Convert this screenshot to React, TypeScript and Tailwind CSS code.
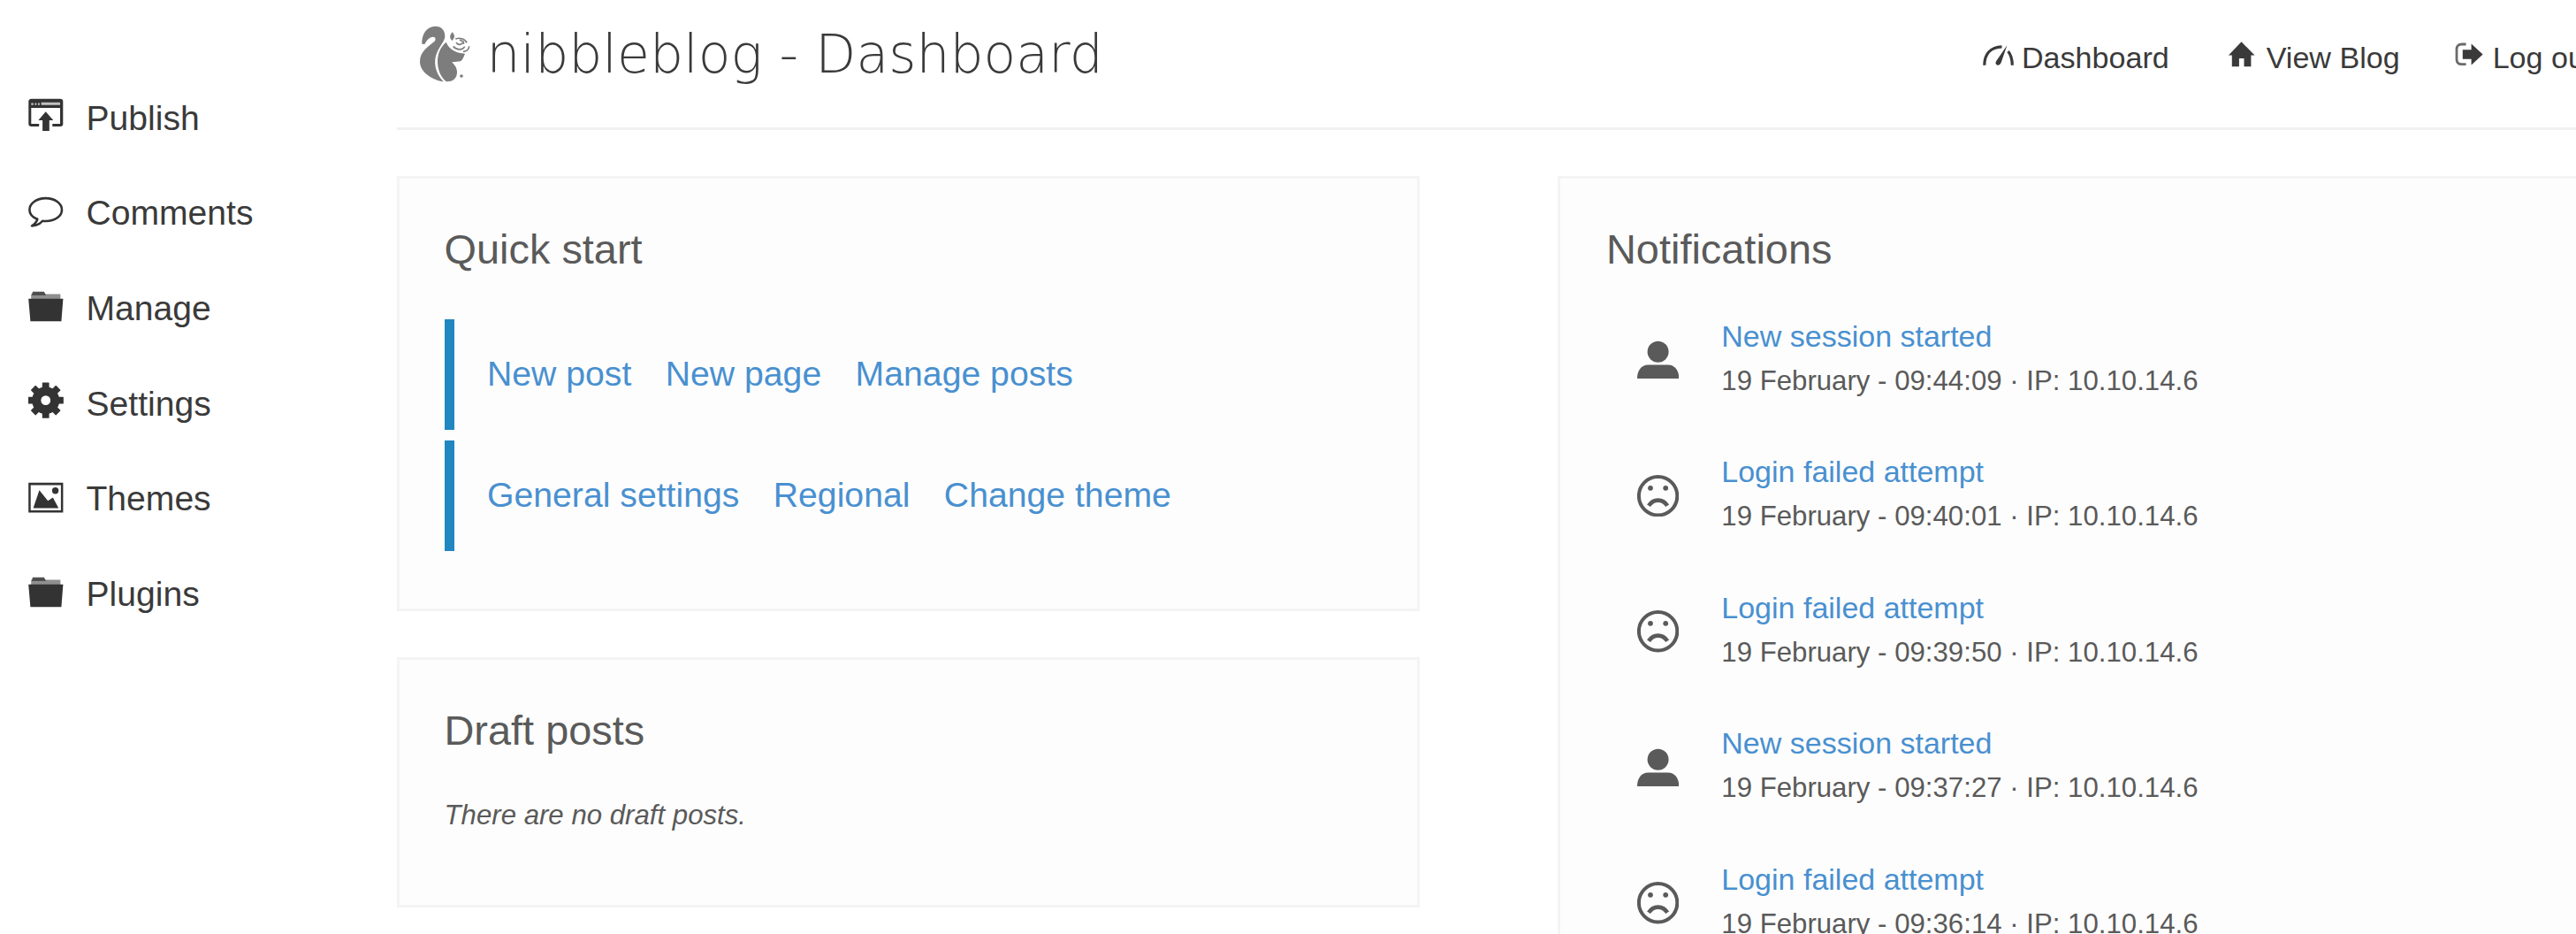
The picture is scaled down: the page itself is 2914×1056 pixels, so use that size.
import type { ReactNode } from "react";

const SANS = "font-['Liberation_Sans',Arial,sans-serif]";

function PublishIcon() {
  return (
    <>
      <path d="M3.500 3.700h32.800c1.900 0 3 1.100 3 3v25.600c0 1.700-1.100 2.800-3 2.800H27.300v-3H36V14H3.300v18.100h8.900v3H3.500c-1.900 0-3.200-1.100-3.200-2.800V6.700c0-1.900 1.300-3 3.200-3z" />
      <path d="M3.300 8.600h2.500v2.200H3.300zM7.500 8.600h1.900v2.200H7.500zM11 8.600h1.900v2.200H11zM14.600 7.800H36v3H14.600z" fill="#fff" opacity="0.7" />
      <path d="M19.700 18.300l8.600 9.600h-4.500V40h-7.700V27.900h-4.700z" />
    </>
  );
}

function CommentIcon() {
  return (
    <path
      d="M19.700 8.100C9.300 8.100 1.400 14 1.400 21.200c0 4.400 3.200 8.300 8.900 10.600-.7 3.100-3 5.500-6.200 7.600 5.500-.3 9.400-2.200 12-5.600 1.400.2 2.500.2 3.600.2 10.500 0 18.300-5.600 18.300-12.800S30.200 8.100 19.700 8.100z"
      fill="none"
      stroke="currentColor"
      strokeWidth="2.600"
      strokeLinejoin="round"
    />
  );
}

function FolderIcon() {
  return (
    <>
      <path d="M3.200 9.600h33.200v5.800H3.200z" opacity="0.550" />
      <path d="M3.800 10.800l1.200-4.100h12.800l2.200 4.100z" opacity="0.850" />
      <path d="M.2 14.700h39.200L37.400 40.300H2.400z" />
    </>
  );
}

function GearIcon() {
  return (
    <g>
      {[0, 45, 90, 135].map((a) => (
        <rect key={a} x="15.800" y="1.500" width="7.800" height="40.300" rx="0.600" transform={`rotate(${a} 19.7 21.650)`} />
      ))}
      <circle cx="19.700" cy="21.650" r="15.500" />
      <circle cx="19.700" cy="21.650" r="5.400" fill="#fff" />
    </g>
  );
}

function PictureIcon() {
  return (
    <>
      <path d="M.2 6.700h39.200v33.700H.2zM2.700 9.600v28.300h34.200V9.600z" fillRule="evenodd" />
      <path d="M5.600 35.400l6.900-20.200 9.700 12 5.600-3.700 6.500 11.900z" />
      <circle cx="30.600" cy="15.800" r="3.700" />
    </>
  );
}

function GaugeIcon() {
  return (
    <>
      <path d="M1.800 26.800C1.900 14 9 6.300 21.500 5.800" fill="none" stroke="currentColor" strokeWidth="3.200" />
      <path d="M28.600 11c3.200 4 4.700 9 4.700 15.800" fill="none" stroke="currentColor" strokeWidth="3.200" />
      <path d="M27.400 4.200l-6.600 19.400c-.9 2.600-2.900 3.500-4.600 2.900-1.900-.7-2.200-2.600-1-4.600z" />
    </>
  );
}

function HomeIcon() {
  return <path d="M15.500.3l15 15.200h-4.100v12.800h-7.900v-9.200h-5.600v9.200H4.800V15.500H.9z" />;
}

function LogoutIcon() {
  return (
    <>
      <path d="M13.600 3H8.800C5 3 3 5 3 8.600v11.600c0 3.500 2 5.400 5.800 5.400h4.800" fill="none" stroke="currentColor" strokeWidth="2.800" opacity="0.750" />
      <path d="M19.600 2.400l13 12-13 12.200v-6.800H9.800V9.300h9.800z" />
    </>
  );
}

function Squirrel() {
  return (
    <svg viewBox="45 39 174 198" className="ml-[26px] h-[66px] w-[58px] text-[#7d7d7d]" fill="currentColor">
      <path d="M52 104C50 72 68 44 97 44c22 0 33 14 33 34 0 18-22 36-31 67-9 34 6 67 26 87-32-4-80-30-80-68 0-34 28-50 48-67 8-8 5-17-3-17-14 0-23 14-29 25z" />
      <path d="M134 98c10 22 26 32 44 36l20 3c-4 10-8 21-15 26l-29 3c6 8 17 16 17 34 0 20-14 32-36 32-18-13-30-40-30-68 0-28 10-50 29-66z" />
      <path d="M155 64c5 6 9 12 6 19l-6 10c-9-6-11-17 0-29z" />
      <path d="M166 87c13-5 32-1 38 13M168 99c6 9 16 10 21 1M158 112c12 14 32 14 39 1M212 112c0 9-8 17-20 18M180 90l13 7v8" fill="none" stroke="currentColor" strokeWidth="5" />
      <circle cx="186" cy="213" r="5.500" />
    </svg>
  );
}

function UserIcon() {
  return (
    <>
      <ellipse cx="23.600" cy="14.800" rx="12" ry="12" />
      <path d="M0 45c0-9 4.500-15.600 12.500-15.600h22.300c8 0 12.500 6.600 12.500 15.600z" />
    </>
  );
}

function SadIcon() {
  return (
    <>
      <circle cx="23.600" cy="23.700" r="21.700" fill="none" stroke="currentColor" strokeWidth="4" />
      <circle cx="15" cy="14.800" r="2.900" />
      <circle cx="32.200" cy="14.800" r="2.900" />
      <path d="M13 34.800c5.400-8.200 15.800-8.200 21.200 0" fill="none" stroke="currentColor" strokeWidth="4.600" />
    </>
  );
}

const menu: [string, () => ReactNode][] = [
  ["Publish", PublishIcon],
  ["Comments", CommentIcon],
  ["Manage", FolderIcon],
  ["Settings", GearIcon],
  ["Themes", PictureIcon],
  ["Plugins", FolderIcon],
];

const quickLinks = [
  ["New post", "New page", "Manage posts"],
  ["General settings", "Regional", "Change theme"],
];

const notifications = [
  { ok: true, time: "09:44:09" },
  { ok: false, time: "09:40:01" },
  { ok: false, time: "09:39:50" },
  { ok: true, time: "09:37:27" },
  { ok: false, time: "09:36:14" },
];

function NavItem({ icon, label, className }: { icon: ReactNode; label: string; className: string }) {
  return (
    <a className={`flex shrink-0 items-center gap-[9px] ${className}`}>
      <svg viewBox="0 0 35 32" className="mb-1 h-8 w-[35px] shrink-0" fill="currentColor">
        {icon}
      </svg>
      <span className="whitespace-nowrap">{label}</span>
    </a>
  );
}

function Card({ title, className, children }: { title: string; className: string; children: ReactNode }) {
  return (
    <section className={`border-[3px] border-[#f4f4f4] bg-[#fdfdfd] pt-[52px] text-[#5a5a5a] ${className}`}>
      <h2 className="pl-px text-[46.900px] leading-[56px]">{title}</h2>
      {children}
    </section>
  );
}

export default function App() {
  return (
    <div className={`flex h-[1056px] w-[2914px] overflow-hidden bg-white ${SANS}`}>
      <aside className="w-[449px] shrink-0 pt-[80px] pl-8 text-[39.100px] text-[#3a3a3a]">
        {menu.map(([label, Icon]) => (
          <a key={label} className="flex h-[107.700px] items-center gap-[25.500px]">
            <svg viewBox="0 0 40 44" className="mb-[8px] h-11 w-10 shrink-0 text-[#333]" fill="currentColor">
              <Icon />
            </svg>
            <span>{label}</span>
          </a>
        ))}
      </aside>

      <div className="w-[2465px] shrink-0">
        <header className="flex h-[147px] items-start justify-between border-b-[3px] border-[#f1f1f1]">
          <div className="flex h-[122px] items-center gap-[17.500px]">
            <Squirrel />
            <h1 className="font-['DejaVu_Sans',sans-serif] text-[60px] font-extralight whitespace-nowrap text-[#3a3a3a]">
              nibbleblog - Dashboard
            </h1>
          </div>
          <nav className="flex h-[131px] w-[671px] items-center overflow-hidden text-[34.100px] text-[#3a3a3a]">
            <NavItem icon={<GaugeIcon />} label="Dashboard" className="" />
            <NavItem icon={<HomeIcon />} label="View Blog" className="ml-[66px]" />
            <NavItem icon={<LogoutIcon />} label="Log out" className="ml-[61px]" />
          </nav>
        </header>

        <main className="flex items-start pt-[52px]">
          <div className="flex w-[1157px] shrink-0 flex-col gap-[52px]">
            <Card title="Quick start" className="h-[492px] pl-[49.500px]">
              <div className="mt-[50.500px] flex flex-col gap-[12.500px] pl-[1.500px]">
                {quickLinks.map((row) => (
                  <div
                    key={row[0]}
                    className="flex h-[125px] items-center gap-[38.400px] border-l-[11px] border-[#2187c0] pl-[37px] text-[39.200px] text-[#4990d0]"
                  >
                    {row.map((label) => (
                      <a key={label}>{label}</a>
                    ))}
                  </div>
                ))}
              </div>
            </Card>
            <Card title="Draft posts" className="h-[283px] pl-[49.500px]">
              <p className="mt-[43px] pl-px text-[31.200px] leading-[50px] italic">There are no draft posts.</p>
            </Card>
          </div>

          <Card title="Notifications" className="ml-[156px] h-[1200px] w-[1240px] shrink-0 pl-[51px]">
            <ul className="mt-[44.600px] flex flex-col gap-[52.600px]">
              {notifications.map(({ ok, time }) => (
                <li key={time} className="flex h-[101px] items-start gap-[48.500px] pl-[35.500px]">
                  <svg viewBox="0 0 47.300 47.300" className="mt-[28.500px] size-[47.300px] shrink-0" fill="currentColor">
                    {ok ? <UserIcon /> : <SadIcon />}
                  </svg>
                  <div className="leading-[50px]">
                    <a className="block text-[34px] text-[#4990d0]">
                      {ok ? "New session started" : "Login failed attempt"}
                    </a>
                    <p className="pt-px text-[31.200px]">19 February - {time} · IP: 10.10.14.6</p>
                  </div>
                </li>
              ))}
            </ul>
          </Card>
        </main>
      </div>
    </div>
  );
}
